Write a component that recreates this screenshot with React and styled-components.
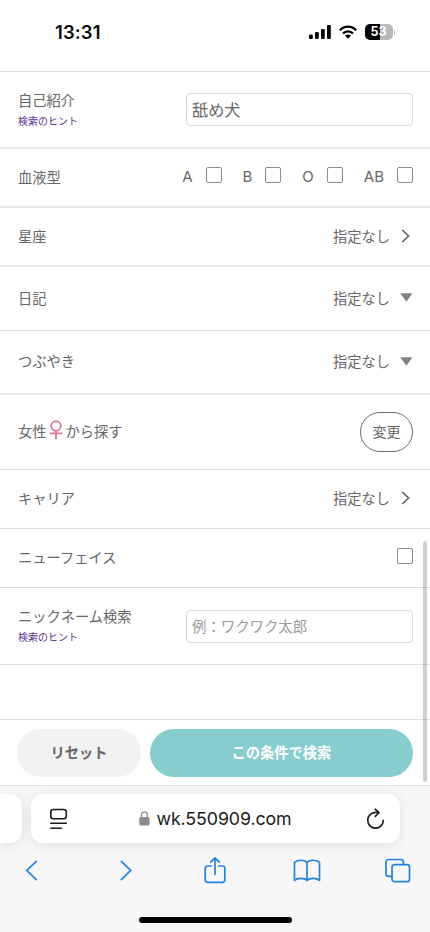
import React from 'react';
import styled, { createGlobalStyle, css } from 'styled-components';

const GREY_TEXT = '#666';
const GREY_LINE = '#dedede';
const GREY_LINE_SOFT = '#ebebeb';
const PURPLE = '#5c2e91';
const TEAL = '#87cdcd';
const PINK = '#dd7a98';
const BLUE = '#2383e2';

const GlobalStyle = createGlobalStyle`
  * {
    box-sizing: border-box;
  }

  body {
    margin: 0;
    background: #fff;
    color: ${GREY_TEXT};
    font-family: 'Noto Sans CJK JP', sans-serif;
  }
`;

const Screen = styled.div`
  position: relative;
  display: flex;
  flex-direction: column;
  width: 430px;
  height: 932px;
  overflow: hidden;
  background: #fff;
`;

const StatusBar = styled.header`
  display: flex;
  justify-content: space-between;
  align-items: center;
  height: 72px;
  padding: 0 35px 7px 55px;
  border-bottom: 1px solid ${GREY_LINE};
`;

const Clock = styled.span`
  color: #0a0a0a;
  font: 600 18.5px/22px Inter, sans-serif;
  letter-spacing: 0.1px;
`;

const StatusIcons = styled.div`
  display: flex;
  align-items: center;
  gap: 8px;
`;

const Battery = styled.div`
  display: flex;
  align-items: center;
  gap: 1px;

  &::after {
    content: '';
    width: 1.5px;
    height: 5px;
    border-radius: 0 2px 2px 0;
    background: #b9b9b9;
  }
`;

const BatteryLevel = styled.span`
  width: 28px;
  height: 16px;
  border-radius: 5px;
  background: linear-gradient(90deg, #000 53%, #b9b9b9 53%);
  color: #fff;
  font: 700 12.5px/16px Inter, sans-serif;
  text-align: center;
`;

const Form = styled.main`
  flex: 1;
`;

const Row = styled.section`
  display: flex;
  justify-content: space-between;
  align-items: center;
  height: ${({ $height }) => $height || 59}px;
  padding: 0 17px 0 18px;
  border-bottom: 1px solid ${GREY_LINE};
  ${({ $soft }) => $soft && css`
    border-bottom: 2px solid ${GREY_LINE_SOFT};
  `}
`;

const Label = styled.span`
  display: flex;
  align-items: center;
  padding-bottom: 2px;
  font-size: 14.25px;
  line-height: 20px;
`;

const LabelGroup = styled.div`
  display: flex;
  flex-direction: column;
`;

const Hint = styled.a`
  color: ${PURPLE};
  font-size: 10px;
  line-height: 18px;
`;

const TextInput = styled.input`
  width: 227px;
  height: 33px;
  padding: 0 5px 2px;
  border: 1px solid #dcdcdc;
  border-radius: 4px;
  outline: 0;
  background: #fff;
  color: ${GREY_TEXT};
  font-family: inherit;
  font-size: 16.2px;

  &::placeholder {
    color: #9b9b9f;
    font-size: 14.4px;
  }
`;

const Options = styled.div`
  display: flex;
  gap: 21px;
`;

const Option = styled.label`
  display: flex;
  align-items: center;
  gap: 13px;
`;

const OptionName = styled.span`
  padding-bottom: 1px;
  font: 400 15px/20px Inter, sans-serif;
`;

const Checkbox = styled.input.attrs({ type: 'checkbox' })`
  appearance: none;
  width: 16px;
  height: 16px;
  margin: 0 0 5px;
  border: 1px solid #8c8c8c;
  border-radius: 2px;
  background: #fff;
`;

const Value = styled.div`
  display: flex;
  align-items: center;
  gap: ${({ $gap }) => $gap}px;
  padding-bottom: 2px;
  font-size: 14.25px;
  line-height: 20px;
`;

const ChangeButton = styled.button`
  width: 53px;
  height: 40px;
  padding: 0 0 2px;
  border: 1px solid #6b6b6b;
  border-radius: 20px;
  background: #fff;
  color: ${GREY_TEXT};
  font-family: inherit;
  font-size: 14px;
`;

const Actions = styled.footer`
  display: flex;
  gap: 9px;
  height: 67px;
  padding: 9px 17px 0;
  border-top: 1px solid ${GREY_LINE};
  border-bottom: 1px solid ${GREY_LINE};
`;

const ActionButton = styled.button`
  flex: ${({ $primary }) => ($primary ? '1' : '0 0 124px')};
  height: 48px;
  padding: 0 0 3px;
  border: 0;
  border-radius: 24px;
  background: ${({ $primary }) => ($primary ? TEAL : '#f2f2f2')};
  color: ${({ $primary }) => ($primary ? '#fff' : GREY_TEXT)};
  font-family: inherit;
  font-size: 14.25px;
  font-weight: 700;
`;

const ScrollThumb = styled.div`
  position: absolute;
  top: 541px;
  right: 3px;
  width: 4px;
  height: 241px;
  border-radius: 2px;
  background: rgba(0, 0, 0, 0.18);
`;

const Browser = styled.div`
  height: 146px;
  padding-top: 8px;
  overflow: hidden;
  background: #f7f7f7;
`;

const TabStrip = styled.div`
  display: flex;
  gap: 9px;
  height: 49px;
`;

const TabCard = styled.div`
  border-radius: 12px;
  background: #fff;
  box-shadow: 0 2px 12px rgba(0, 0, 0, 0.1);
`;

const PreviousTab = styled(TabCard)`
  width: 22px;
  border-radius: 0 12px 12px 0;
`;

const AddressBar = styled(TabCard)`
  display: flex;
  justify-content: space-between;
  align-items: center;
  width: 369px;
  padding: 0 15px 0 18px;
`;

const Address = styled.div`
  display: flex;
  align-items: center;
  gap: 6px;
  margin-right: 4px;
  color: #1b1b1b;
  font: 400 17.8px/22px Inter, sans-serif;
  letter-spacing: -0.1px;
`;

const Toolbar = styled.nav`
  display: flex;
  justify-content: space-between;
  height: 41px;
  padding: 13px 18px 0;
`;

const HomeIndicator = styled.div`
  width: 153px;
  height: 6px;
  margin: 33px auto 0;
  border-radius: 3px;
  background: #000;
`;

const ToolIcon = styled.svg.attrs({ viewBox: '0 0 28 28' })`
  width: 28px;
  height: 28px;
  fill: none;
  stroke: ${BLUE};
  stroke-width: 1.7;
  stroke-linecap: round;
  stroke-linejoin: round;
`;

const SignalIcon = () => (
  <svg width="22" height="14" viewBox="0 0 22 14">
    <rect x="0" y="9.5" width="3.8" height="4.5" rx="1.2" />
    <rect x="6" y="7" width="3.8" height="7" rx="1.2" />
    <rect x="12" y="4" width="3.8" height="10" rx="1.2" />
    <rect x="18" y="0" width="3.8" height="14" rx="1.2" />
  </svg>
);

const WifiIcon = () => (
  <svg width="18" height="14" viewBox="0 0 18 14">
    <g fill="none" stroke="#000" strokeWidth="2.4">
      <path d="M0.9 5.2C5.4 0.4 12.6 0.4 17.1 5.2" />
      <path d="M4 8.5C6.8 5.6 11.2 5.6 14 8.5" />
    </g>
    <path d="M9 13.7L5.9 10.5C7.7 9 10.3 9 12.1 10.5Z" />
  </svg>
);

const ChevronIcon = () => (
  <svg width="9" height="14" viewBox="0 0 9 14" fill="none" stroke="#606060" strokeWidth="1.6">
    <path d="M1.2 1L7.6 7L1.2 13" />
  </svg>
);

const CaretIcon = () => (
  <svg width="13" height="9" viewBox="0 0 13 9">
    <path d="M0.3 0.3H12.5L6.4 8.7Z" fill="#858585" />
  </svg>
);

const FemaleSymbol = styled.svg.attrs({ viewBox: '0 0 14 20' })`
  width: 14px;
  height: 20px;
  margin: -2px 3px 0 2px;
  fill: none;
  stroke: ${PINK};
  stroke-width: 1.8;
`;

const LockIcon = () => (
  <svg width="11" height="15" viewBox="0 0 11 15">
    <rect x="0.3" y="6" width="10.2" height="8.5" rx="1.5" fill="#8b8b8b" />
    <path d="M2.5 6.5V4A2.9 3.2 0 0 1 8.3 4V6.5" fill="none" stroke="#8b8b8b" strokeWidth="1.3" />
  </svg>
);

const PageMenuIcon = () => (
  <svg width="20" height="22" viewBox="0 0 20 22" fill="none" stroke="#1b1b1b" strokeWidth="1.6" strokeLinecap="round">
    <rect x="1.800" y="1.500" width="15.500" height="9.300" rx="2.500" />
    <path d="M1.800 15.300H17.300M1.800 20.200H12.300" />
  </svg>
);

const ReloadIcon = () => (
  <svg width="19" height="22" viewBox="0 0 19 22" fill="none" stroke="#1b1b1b" strokeWidth="1.6" strokeLinecap="round" strokeLinejoin="round">
    <path d="M12.400 4.600C6.200 3.300 1.700 7.300 1.700 12.300A7.800 7.800 0 0 0 17.300 12.300" />
    <path d="M9.200 1.200L12.900 4.700L9.200 8.400" />
  </svg>
);

const BLOOD_TYPES = ['A', 'B', 'O', 'AB'];

const ChevronWrapper = styled.span`
  display: flex;
  margin-right: 3px;
`;

/**
 * Row whose value opens either a page (chevron) or a select (caret)
 * @param {Object} props label, select flag and the row styles
 * @returns {JSX}
 */
const ValueRow = ({ label, isSelect, ...rowProps }) => (
  <Row {...rowProps}>
    <Label>{label}</Label>
    <Value $gap={isSelect ? 10 : 11}>
      指定なし
      {isSelect ? <CaretIcon /> : <ChevronWrapper><ChevronIcon /></ChevronWrapper>}
    </Value>
  </Row>
);

const InputRow = ({ label, ...inputProps }) => (
  <Row {...(inputProps.defaultValue ? { $soft: true } : {})} $height={77}>
    <LabelGroup>
      <Label>{label}</Label>
      <Hint>検索のヒント</Hint>
    </LabelGroup>
    <TextInput {...inputProps} />
  </Row>
);

const App = () => (
  <>
    <GlobalStyle />
    <Screen>
      <StatusBar>
        <Clock>13:31</Clock>
        <StatusIcons>
          <SignalIcon />
          <WifiIcon />
          <Battery><BatteryLevel>53</BatteryLevel></Battery>
        </StatusIcons>
      </StatusBar>

      <Form>
        <InputRow label="自己紹介" defaultValue="舐め犬" />
        <Row $soft>
          <Label>血液型</Label>
          <Options>
            {BLOOD_TYPES.map(type => (
              <Option key={type}>
                <OptionName>{type}</OptionName>
                <Checkbox />
              </Option>
            ))}
          </Options>
        </Row>
        <ValueRow label="星座" $soft />
        <ValueRow label="日記" isSelect $height={64} />
        <ValueRow label="つぶやき" isSelect $height={64} $soft />
        <Row $height={75}>
          <Label>
            女性
            <FemaleSymbol>
              <circle cx="7" cy="6" r="4.800" />
              <path d="M7 10.800V19.200M0.800 13.300H13.200" />
            </FemaleSymbol>
            から探す
          </Label>
          <ChangeButton>変更</ChangeButton>
        </Row>
        <ValueRow label="キャリア" />
        <Row>
          <Label>ニューフェイス</Label>
          <Checkbox />
        </Row>
        <InputRow label="ニックネーム検索" placeholder="例：ワクワク太郎" />
      </Form>

      <Actions>
        <ActionButton>リセット</ActionButton>
        <ActionButton $primary>この条件で検索</ActionButton>
      </Actions>

      <Browser>
        <TabStrip>
          <PreviousTab />
          <AddressBar>
            <PageMenuIcon />
            <Address>
              <LockIcon />
              wk.550909.com
            </Address>
            <ReloadIcon />
          </AddressBar>
        </TabStrip>
        <Toolbar>
          <ToolIcon><path d="M18.3 5.3L8.7 14.3L18.3 23.7" /></ToolIcon>
          <ToolIcon><path d="M11.3 5.3L20.7 14.3L11.3 23.7" /></ToolIcon>
          <ToolIcon>
            <path d="M10.3 10H6.5A2.3 2.3 0 0 0 4.2 12.3V24A2.3 2.3 0 0 0 6.5 26.3H21.5A2.3 2.3 0 0 0 23.8 24V12.3A2.3 2.3 0 0 0 21.5 10H17.7" />
            <path d="M14 18.3V2M9.6 6.2L14 1.8L18.4 6.2" />
          </ToolIcon>
          <ToolIcon>
            <path d="M14 6.3C11.5 3.6 4.5 3.5 1.5 6.3V24.3C4.5 21.7 11.5 21.7 14 24.3C16.5 21.7 23.5 21.7 26.5 24.3V6.3C23.5 3.5 16.5 3.6 14 6.3V24.3" />
          </ToolIcon>
          <ToolIcon>
            <path d="M8 20.3H4.5A2.5 2.5 0 0 1 2 17.8V6A2.5 2.5 0 0 1 4.5 3.5H17A2.5 2.5 0 0 1 19.5 6V8.7" />
            <rect x="8" y="8.7" width="17.5" height="17" rx="2.5" />
          </ToolIcon>
        </Toolbar>
        <HomeIndicator />
      </Browser>
      <ScrollThumb />
    </Screen>
  </>
);

export default App;
